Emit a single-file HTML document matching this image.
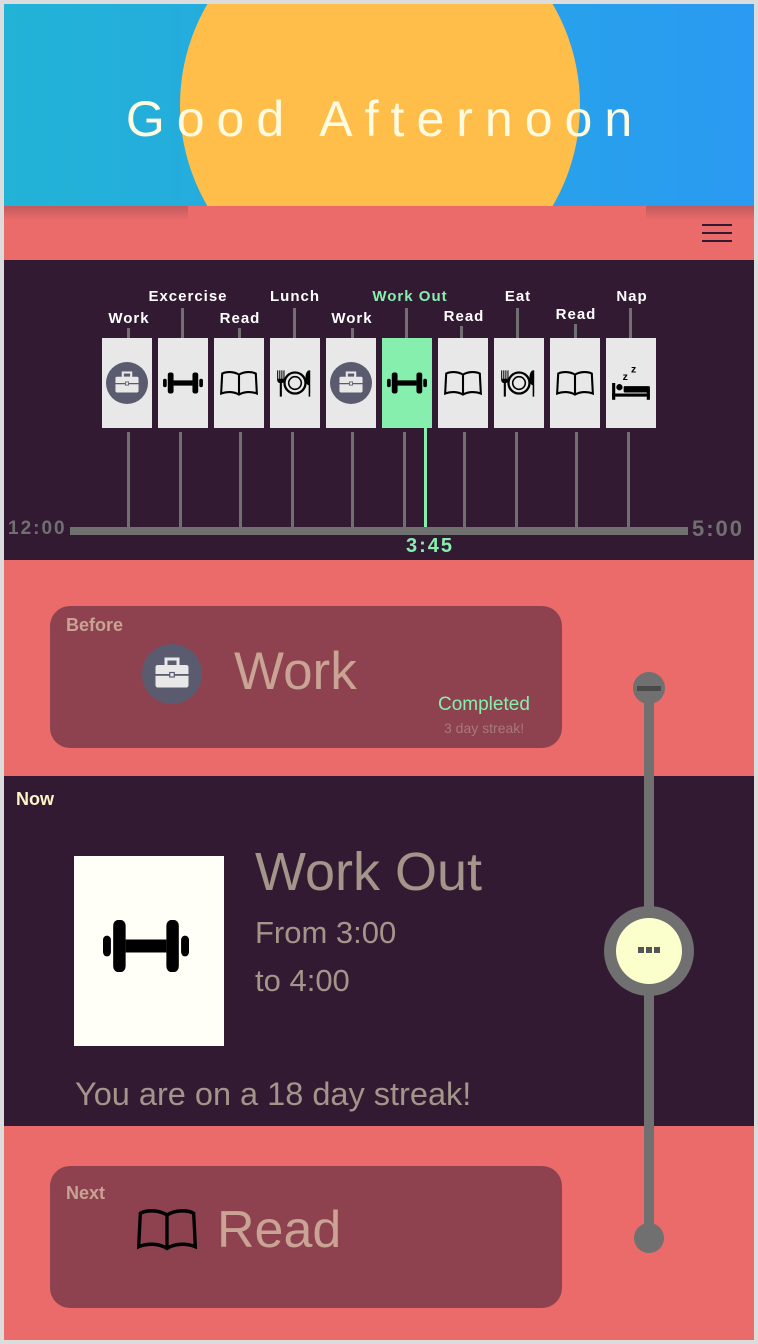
<!DOCTYPE html>
<html><head><meta charset="utf-8"><style>
*{margin:0;padding:0;box-sizing:border-box}
body{width:758px;height:1344px;background:#dcdcdc;position:relative;overflow:hidden;font-family:"Liberation Sans",sans-serif}
.abs{position:absolute}
.lbl{position:absolute;color:#fff;font-weight:bold;font-size:15px;letter-spacing:1px;transform:translateX(-50%);white-space:nowrap}
.card{position:absolute;top:338px;width:50px;height:90px;background:#e8e8e8}
.card svg{position:absolute;left:4px;top:24px}
.stub{position:absolute;width:3px;background:#707070}
</style></head><body>
<svg width="0" height="0" style="position:absolute">
<defs>
<symbol id="brief" viewBox="0 0 40 40"><circle cx="20" cy="20" r="20" fill="#5b5b70"/><rect x="9" y="14" width="22" height="15" rx="1.5" fill="#e8e8e8"/><rect x="16" y="10" width="8" height="5" fill="none" stroke="#e8e8e8" stroke-width="2"/><rect x="9" y="20" width="22" height="1.2" fill="#5b5b70"/><rect x="18.5" y="19" width="3" height="3" fill="#e8e8e8" stroke="#5b5b70" stroke-width="0.8"/></symbol>
<symbol id="dumb" viewBox="0 0 40 40"><rect x="1" y="16" width="3.5" height="8" rx="1.7"/><rect x="35.5" y="16" width="3.5" height="8" rx="1.7"/><rect x="5.5" y="10" width="5.5" height="20" rx="2.2"/><rect x="29" y="10" width="5.5" height="20" rx="2.2"/><rect x="11" y="17.5" width="18" height="5"/></symbol>
<symbol id="book" viewBox="0 0 40 40"><path d="M20 12 C15 9 8 9 4 11 L3 30 C8 28 15 28 20 31 C25 28 32 28 37 30 L36 11 C32 9 25 9 20 12 Z M20 12 V31" fill="none" stroke="#000" stroke-width="2"/></symbol>
<symbol id="food" viewBox="0 0 40 40"><path d="M3 8v9c0 2 1.5 3 2.5 3v13h2V20c1 0 2.5-1 2.5-3V8h-1v8h-1V8h-1v8h-1V8h-1v8h-1V8z"/><circle cx="20" cy="20" r="10" fill="none" stroke="#000" stroke-width="2.2"/><circle cx="20" cy="20" r="6" fill="none" stroke="#000" stroke-width="1.5"/><path d="M33 33V22c-2 0-3-3-3-7 0-4 1.5-7 3.5-7h1v25z"/></symbol>
<symbol id="bed" viewBox="0 0 40 40"><text x="12" y="17" font-size="10" font-family="Liberation Sans" font-weight="bold">z</text><text x="20" y="10" font-size="10" font-family="Liberation Sans" font-weight="bold">z</text><rect x="2" y="20" width="3" height="16"/><rect x="2" y="30" width="36" height="3"/><rect x="35" y="27" width="3" height="9"/><circle cx="9" cy="24" r="3"/><rect x="13" y="23" width="25" height="6" rx="1"/></symbol>
</defs></svg>

<div class="abs" style="left:4px;top:4px;width:750px;height:202px;overflow:hidden;background:linear-gradient(90deg,#22b3d6,#2a9af2)">
<div class="abs" style="left:176px;top:-99px;width:400px;height:400px;border-radius:50%;background:#ffbe4a"></div>
<div class="abs" style="left:0;top:86px;width:762px;text-align:center;color:#fffbe0;font-size:50px;letter-spacing:12px">Good Afternoon</div>
</div>
<div class="abs" style="left:4px;top:206px;width:750px;height:54px;background:#eb6b6a"></div>
<div class="abs" style="left:4px;top:206px;width:184px;height:14px;background:linear-gradient(#c25a5e,#eb6b6a)"></div>
<div class="abs" style="left:646px;top:206px;width:108px;height:14px;background:linear-gradient(#c25a5e,#eb6b6a)"></div>
<div class="abs" style="left:702px;top:224px;width:30px;height:2px;background:#331a33"></div>
<div class="abs" style="left:702px;top:232px;width:30px;height:2px;background:#331a33"></div>
<div class="abs" style="left:702px;top:240px;width:30px;height:2px;background:#331a33"></div>

<div class="abs" style="left:4px;top:260px;width:750px;height:300px;background:#331a33"></div>
<div class="lbl" style="left:129px;top:310px">Work</div>
<div class="lbl" style="left:188px;top:288px">Excercise</div>
<div class="lbl" style="left:240px;top:310px">Read</div>
<div class="lbl" style="left:295px;top:288px">Lunch</div>
<div class="lbl" style="left:352px;top:310px">Work</div>
<div class="lbl" style="left:410px;top:288px;color:#86efae">Work Out</div>
<div class="lbl" style="left:464px;top:308px">Read</div>
<div class="lbl" style="left:518px;top:288px">Eat</div>
<div class="lbl" style="left:576px;top:306px">Read</div>
<div class="lbl" style="left:632px;top:288px">Nap</div>
<div class="stub" style="left:127px;top:328px;height:10px"></div>
<div class="stub" style="left:181px;top:308px;height:30px"></div>
<div class="stub" style="left:238px;top:328px;height:10px"></div>
<div class="stub" style="left:293px;top:308px;height:30px"></div>
<div class="stub" style="left:351px;top:328px;height:10px"></div>
<div class="stub" style="left:405px;top:308px;height:30px"></div>
<div class="stub" style="left:460px;top:326px;height:12px"></div>
<div class="stub" style="left:516px;top:308px;height:30px"></div>
<div class="stub" style="left:574px;top:324px;height:14px"></div>
<div class="stub" style="left:629px;top:308px;height:30px"></div>

<div class="card" style="left:102px"><svg width="42" height="42"><use href="#brief"/></svg></div>
<div class="card" style="left:158px"><svg width="42" height="42"><use href="#dumb"/></svg></div>
<div class="card" style="left:214px"><svg width="42" height="42"><use href="#book"/></svg></div>
<div class="card" style="left:270px"><svg width="42" height="42"><use href="#food"/></svg></div>
<div class="card" style="left:326px"><svg width="42" height="42"><use href="#brief"/></svg></div>
<div class="card" style="left:382px;background:#86efae"><svg width="42" height="42"><use href="#dumb"/></svg></div>
<div class="card" style="left:438px"><svg width="42" height="42"><use href="#book"/></svg></div>
<div class="card" style="left:494px"><svg width="42" height="42"><use href="#food"/></svg></div>
<div class="card" style="left:550px"><svg width="42" height="42"><use href="#book"/></svg></div>
<div class="card" style="left:606px"><svg width="42" height="42"><use href="#bed"/></svg></div>

<div class="stub" style="left:127px;top:432px;height:96px"></div>
<div class="stub" style="left:179px;top:432px;height:96px"></div>
<div class="stub" style="left:239px;top:432px;height:96px"></div>
<div class="stub" style="left:291px;top:432px;height:96px"></div>
<div class="stub" style="left:351px;top:432px;height:96px"></div>
<div class="stub" style="left:403px;top:432px;height:96px"></div>
<div class="stub" style="left:463px;top:432px;height:96px"></div>
<div class="stub" style="left:515px;top:432px;height:96px"></div>
<div class="stub" style="left:575px;top:432px;height:96px"></div>
<div class="stub" style="left:627px;top:432px;height:96px"></div>
<div class="abs" style="left:424px;top:428px;width:3px;height:100px;background:#86efae"></div>
<div class="abs" style="left:70px;top:527px;width:618px;height:8px;background:#707070"></div>
<div class="abs" style="left:8px;top:518px;color:#707070;font-size:19px;font-weight:bold;letter-spacing:2px">12:00</div>
<div class="abs" style="left:692px;top:516px;color:#707070;font-size:22px;font-weight:bold;letter-spacing:2px">5:00</div>
<div class="abs" style="left:406px;top:535px;color:#86efae;font-size:20px;font-weight:bold;letter-spacing:2px">3:45</div>

<div class="abs" style="left:4px;top:560px;width:750px;height:216px;background:#eb6b6a"></div>
<div class="abs" style="left:50px;top:606px;width:512px;height:142px;border-radius:20px;background:#8e4250"></div>
<div class="abs" style="left:66px;top:615px;color:#c9a393;font-size:18px;font-weight:bold">Before</div>
<svg class="abs" style="left:142px;top:644px" width="60" height="60"><use href="#brief"/></svg>
<div class="abs" style="left:234px;top:641px;color:#c9a393;font-size:53px">Work</div>
<div class="abs" style="left:438px;top:694px;color:#86efae;font-size:19px">Completed</div>
<div class="abs" style="left:444px;top:720px;color:#a8797a;font-size:14px">3 day streak!</div>

<div class="abs" style="left:4px;top:776px;width:750px;height:350px;background:#331a33"></div>
<div class="abs" style="left:16px;top:789px;color:#fcf5c8;font-size:18px;font-weight:bold">Now</div>
<div class="abs" style="left:74px;top:856px;width:150px;height:190px;background:#fffff7"></div>
<svg class="abs" style="left:103px;top:920px" width="86" height="52" viewBox="1 10 38 20" preserveAspectRatio="none"><use href="#dumb" x="0" y="0" width="40" height="40"/></svg>
<div class="abs" style="left:255px;top:841px;color:#a39589;font-size:54px">Work Out</div>
<div class="abs" style="left:255px;top:915px;color:#a39589;font-size:31px">From 3:00</div>
<div class="abs" style="left:255px;top:963px;color:#a39589;font-size:31px">to 4:00</div>
<div class="abs" style="left:75px;top:1076px;color:#a39589;font-size:32.5px">You are on a 18 day streak!</div>

<div class="abs" style="left:4px;top:1126px;width:750px;height:214px;background:#eb6b6a"></div>
<div class="abs" style="left:50px;top:1166px;width:512px;height:142px;border-radius:20px;background:#8e4250"></div>
<div class="abs" style="left:66px;top:1183px;color:#c9a393;font-size:18px;font-weight:bold">Next</div>
<svg class="abs" style="left:137px;top:1208px" width="60" height="44" viewBox="2 8 36 25" preserveAspectRatio="none"><use href="#book" x="0" y="0" width="40" height="40"/></svg>
<div class="abs" style="left:217px;top:1200px;color:#c9a393;font-size:52px">Read</div>

<div class="abs" style="left:644px;top:688px;width:10px;height:550px;background:#707070"></div>
<div class="abs" style="left:633px;top:672px;width:32px;height:32px;border-radius:50%;background:#707070"></div>
<div class="abs" style="left:637px;top:686px;width:24px;height:5px;background:#4a4a4a"></div>
<div class="abs" style="left:604px;top:906px;width:90px;height:90px;border-radius:50%;background:#707070"></div>
<div class="abs" style="left:616px;top:918px;width:66px;height:66px;border-radius:50%;background:#fbffcc"></div>
<div class="abs" style="left:638px;top:947px;width:22px;height:6px;background:repeating-linear-gradient(90deg,#555 0 6px,transparent 6px 8px)"></div>
<div class="abs" style="left:634px;top:1223px;width:30px;height:30px;border-radius:50%;background:#707070"></div>
</body></html>
